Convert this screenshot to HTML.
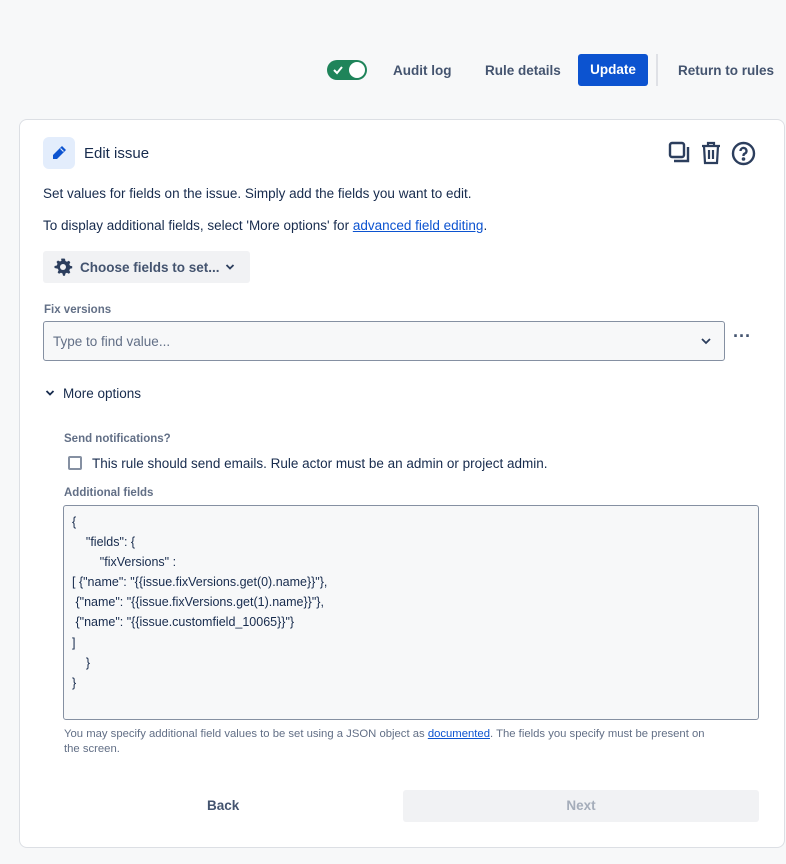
<!DOCTYPE html>
<html><head><style>
*{box-sizing:border-box;margin:0;padding:0}
body{width:786px;height:864px;background:#f7f8f9;font-family:"Liberation Sans",sans-serif;color:#172b4d;position:relative;overflow:hidden;font-size:13px}
.a{position:absolute;white-space:nowrap}
.nav{font-size:13.5px;font-weight:bold;color:#44546f;top:63px}
</style></head><body>
<div class="a" style="left:327px;top:60px;width:40px;height:20px;border-radius:10px;background:#1f845a"></div>
<div class="a" style="left:349px;top:62px;width:16px;height:16px;border-radius:8px;background:#fff"></div>
<svg class="a" style="left:332px;top:64px" width="12" height="12" viewBox="0 0 12 12"><path d="M2 6l3 3 5-6" stroke="#fff" stroke-width="2" fill="none"/></svg>
<div class="a nav" style="left:393px">Audit log</div>
<div class="a nav" style="left:485px">Rule details</div>
<div class="a" style="left:578px;top:54px;width:70px;height:32px;background:#0c53d0;border-radius:3px;color:#fff;font-weight:bold;font-size:13.5px;text-align:center;line-height:32px">Update</div>
<div class="a" style="left:656px;top:54px;width:2px;height:32px;background:#dfe1e6"></div>
<div class="a nav" style="left:678px">Return to rules</div>

<div class="a" style="left:19px;top:119px;width:766px;height:729px;background:#fff;border:1px solid #dcdfe4;border-radius:8px"></div>
<div class="a" style="left:43px;top:137px;width:32px;height:32px;background:#e3edfc;border-radius:6px"></div>
<svg class="a" style="left:51px;top:145px" width="16" height="16" viewBox="0 0 16 16"><path d="M11 1l4 4-9 9H2v-4z" fill="#0c53d0"/><path d="M9.5 3.5l3 3" stroke="#e3edfc" stroke-width="1.2"/></svg>
<div class="a" style="left:84px;top:145px;font-size:15px;color:#172b4d">Edit issue</div>
<svg class="a" style="left:668px;top:141px" width="24" height="24" viewBox="0 0 24 24" fill="none" stroke="#2c3e5d" stroke-width="2.4"><rect x="2" y="2" width="14" height="14" rx="2"/><path d="M20 6v14H6"/></svg>
<svg class="a" style="left:700px;top:141px" width="22" height="24" viewBox="0 0 22 24" fill="none" stroke="#2c3e5d" stroke-width="2.2"><path d="M2 5h18M8 5V2h6v3M4 5l1 17h12l1-17M9 9v9M13 9v9"/></svg>
<svg class="a" style="left:731px;top:141px" width="25" height="25" viewBox="0 0 25 25" fill="none" stroke="#2c3e5d" stroke-width="2.4"><circle cx="12.5" cy="12.5" r="10.5"/><path d="M9.5 10a3 3 0 1 1 4 2.8c-1 .4-1 1-1 2.2"/><circle cx="12.5" cy="18" r=".6" fill="#2c3e5d"/></svg>

<div class="a" style="left:43px;top:186px;font-size:13.5px">Set values for fields on the issue. Simply add the fields you want to edit.</div>
<div class="a" style="left:43px;top:218px;font-size:13.5px">To display additional fields, select 'More options' for <span style="color:#0c53d0;text-decoration:underline">advanced field editing</span>.</div>

<div class="a" style="left:43px;top:251px;width:207px;height:32px;background:#f1f2f4;border-radius:3px"></div>
<svg class="a" style="left:53px;top:257px" width="20" height="20" viewBox="0 0 20 20"><path d="M10 1.5l2 .3.4 2.2 1.5.8 2-1 1.4 1.4-1 2 .7 1.6 2.2.5v2l-2.2.5-.7 1.6 1 2-1.4 1.4-2-1-1.5.7-.4 2.3h-2l-.5-2.3-1.5-.7-2 1-1.4-1.4 1-2-.7-1.6L1.5 11V9l2.3-.5.7-1.6-1-2L5 3.5l2 1 1.5-.8L8 1.8z" fill="#2c3e5d"/><circle cx="10" cy="10" r="3" fill="#f1f2f4"/></svg>
<div class="a" style="left:80px;top:260px;font-size:13.5px;font-weight:bold;color:#44546f">Choose fields to set...</div>
<svg class="a" style="left:225px;top:263px" width="10" height="8" viewBox="0 0 10 8"><path d="M1.5 2l3.5 3.5L8.5 2" stroke="#2c3e5d" stroke-width="1.8" fill="none"/></svg>

<div class="a" style="left:44px;top:304px;font-size:11.5px;font-weight:bold;color:#626f86">Fix versions</div>
<div class="a" style="left:43px;top:321px;width:682px;height:40px;background:#f7f8f9;border:1px solid #8590a2;border-radius:3px"></div>
<div class="a" style="left:53px;top:334px;font-size:13.5px;color:#626f86">Type to find value...</div>
<svg class="a" style="left:700px;top:337px" width="12" height="8" viewBox="0 0 12 8"><path d="M2 2l4 4 4-4" stroke="#2c3e5d" stroke-width="1.8" fill="none"/></svg>
<div class="a" style="left:733px;top:326px;font-size:18px;font-weight:bold;color:#44546f">···</div>

<svg class="a" style="left:45px;top:389px" width="10" height="8" viewBox="0 0 10 8"><path d="M1.5 2l3.5 3.5L8.5 2" stroke="#172b4d" stroke-width="1.8" fill="none"/></svg>
<div class="a" style="left:63px;top:386px;font-size:13.5px">More options</div>

<div class="a" style="left:64px;top:433px;font-size:11.5px;font-weight:bold;color:#626f86">Send notifications?</div>
<div class="a" style="left:68px;top:456px;width:14px;height:14px;border:2px solid #8590a2;border-radius:2px"></div>
<div class="a" style="left:92px;top:456px;font-size:13.5px">This rule should send emails. Rule actor must be an admin or project admin.</div>
<div class="a" style="left:64px;top:487px;font-size:11.5px;font-weight:bold;color:#626f86">Additional fields</div>
<div class="a" style="left:63px;top:505px;width:696px;height:215px;background:#f7f8f9;border:1px solid #8590a2;border-radius:3px"></div>
<div class="a" style="left:72px;top:512px;font-size:12.5px;line-height:20.1px;white-space:pre">{
    "fields": {
        "fixVersions" :
[ {"name": "{{issue.fixVersions.get(0).name}}"},
 {"name": "{{issue.fixVersions.get(1).name}}"},
 {"name": "{{issue.customfield_10065}}"}
]
    }
}</div>
<div class="a" style="left:64px;top:727px;font-size:11.3px;color:#626f86;line-height:15px;white-space:normal;width:698px">You may specify additional field values to be set using a JSON object as <span style="color:#0c53d0;text-decoration:underline">documented</span>. The fields you specify must be present on the&nbsp;screen.</div>

<div class="a" style="left:207px;top:798px;font-size:13.5px;font-weight:bold;color:#44546f">Back</div>
<div class="a" style="left:403px;top:790px;width:356px;height:32px;background:#f1f2f4;border-radius:3px;color:#a5adba;font-weight:bold;font-size:13.5px;text-align:center;line-height:32px">Next</div>
</body></html>
